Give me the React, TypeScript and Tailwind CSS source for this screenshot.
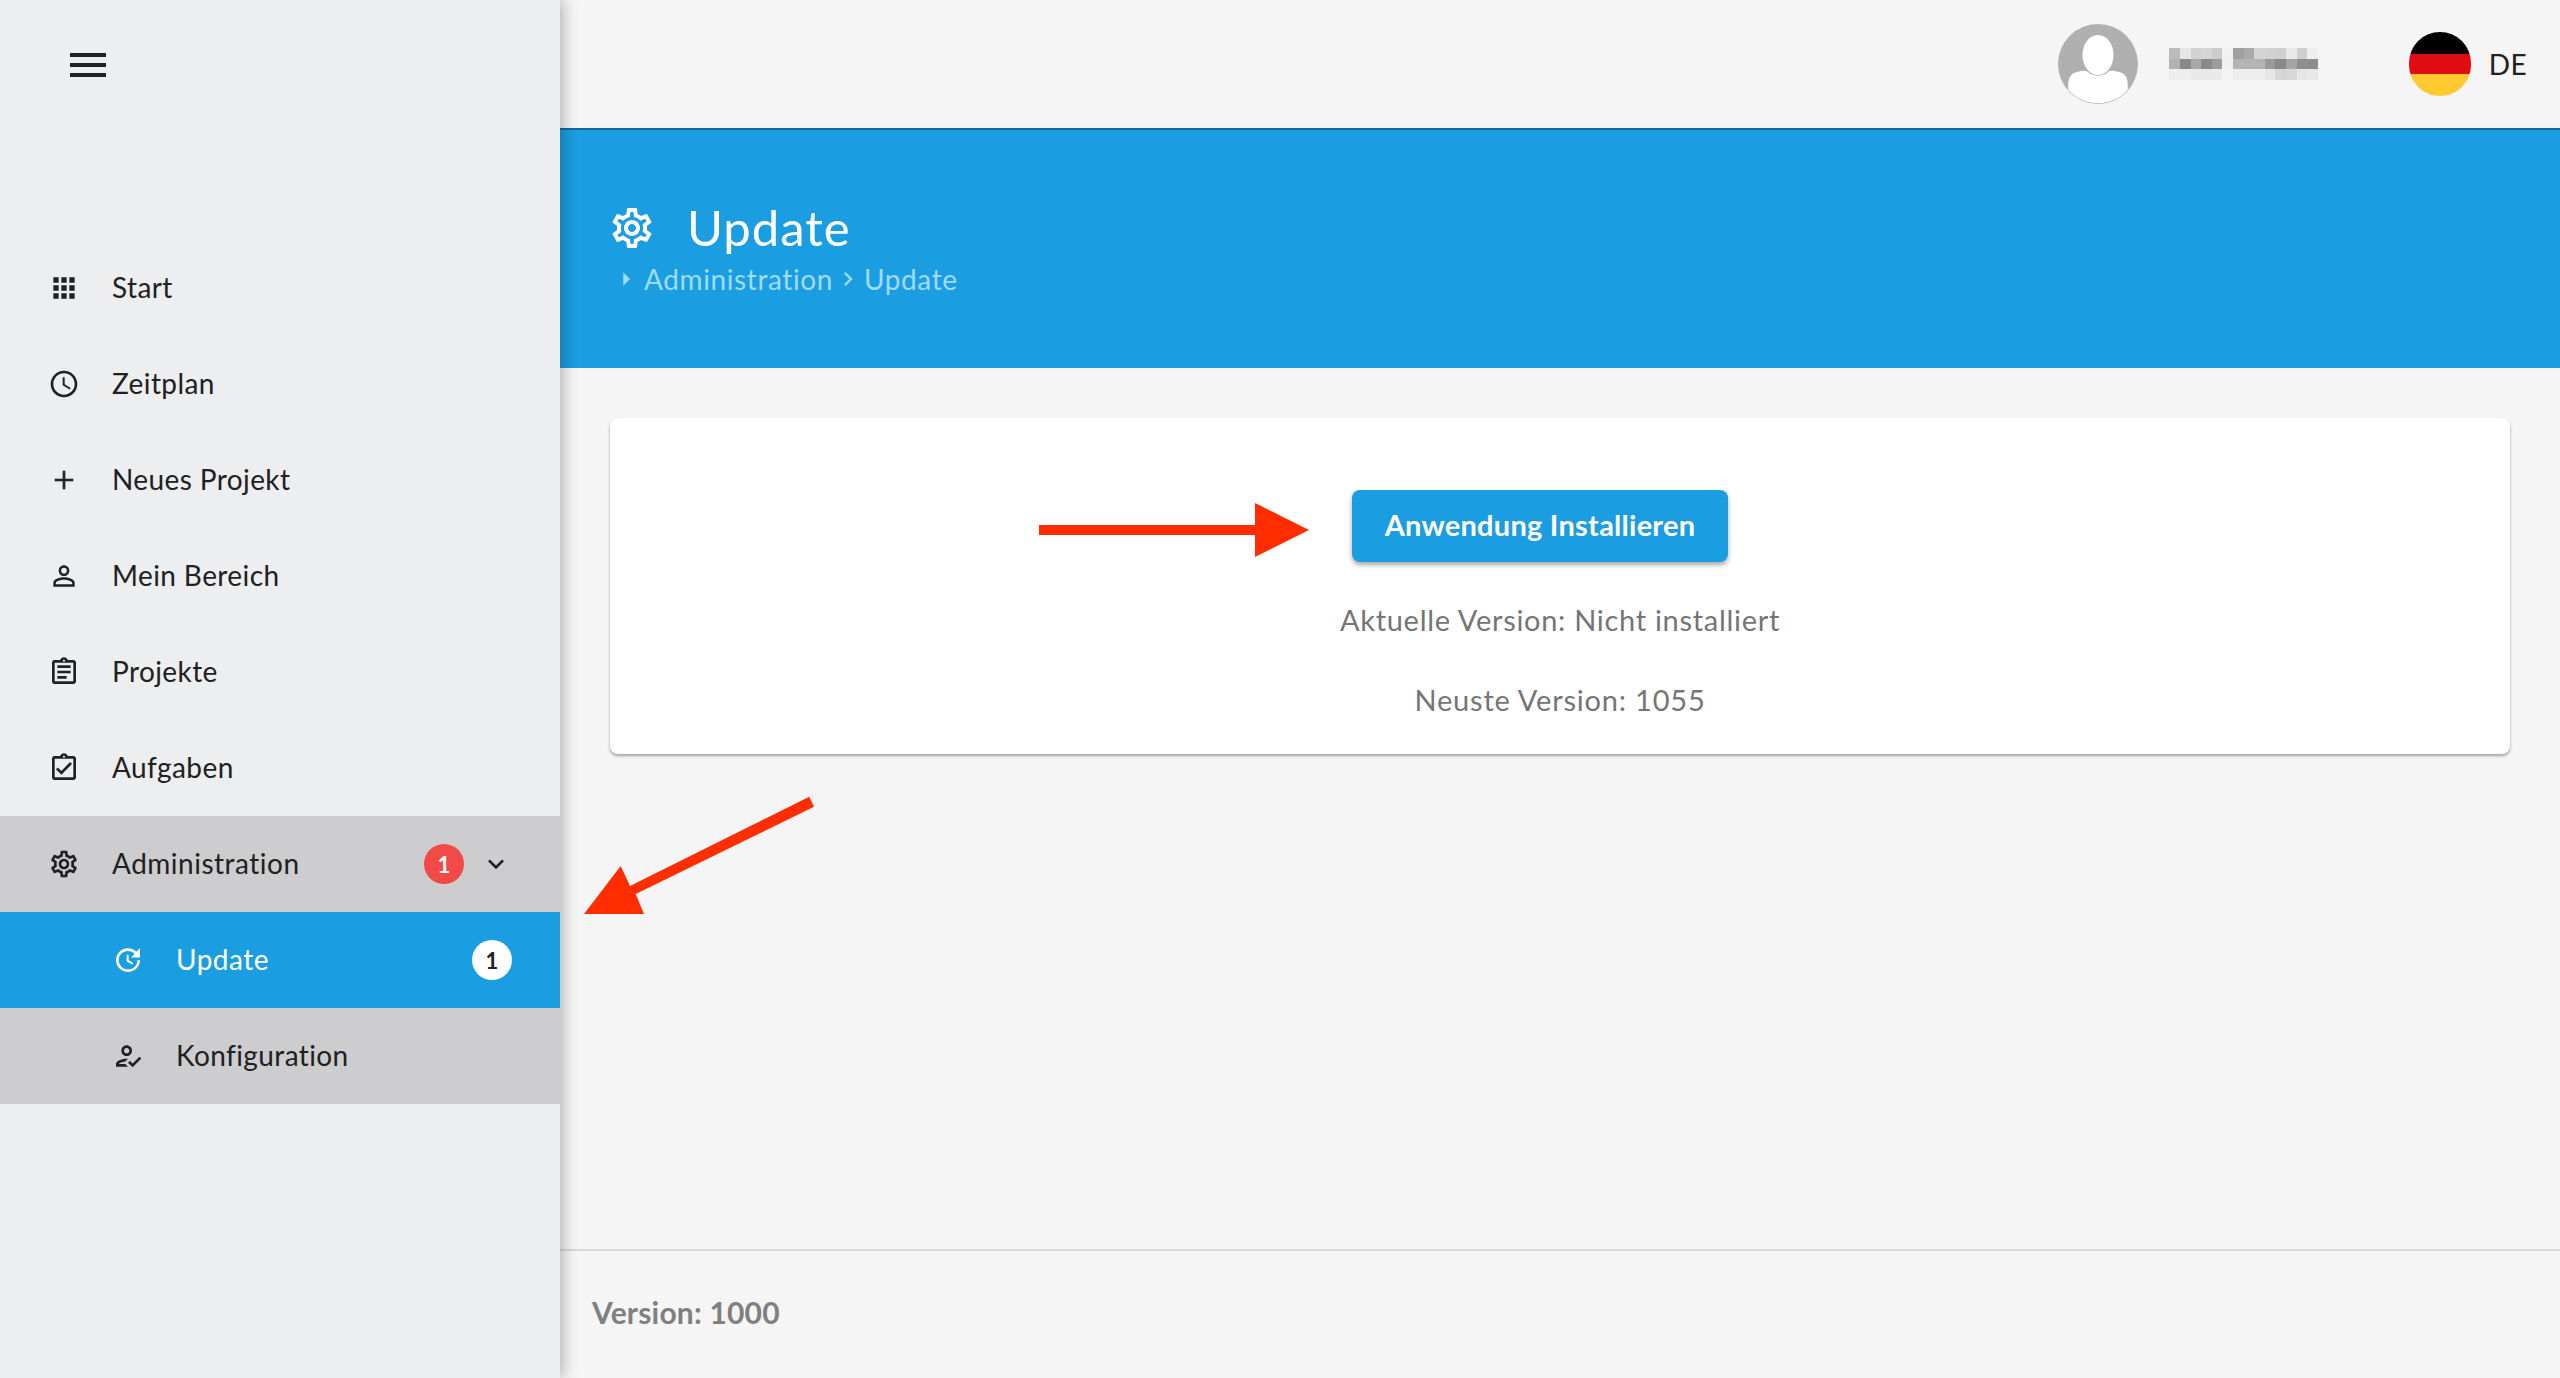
import {
  MdAccessTime,
  MdAdd,
  MdApps,
  MdArrowRight,
  MdChevronRight,
  MdExpandMore,
  MdMenu,
  MdOutlineAssignment,
  MdOutlineAssignmentTurnedIn,
  MdOutlineHowToReg,
  MdOutlineSettings,
  MdPersonOutline,
  MdUpdate,
} from "react-icons/md";

const menu = [
  { label: "Start", icon: MdApps },
  { label: "Zeitplan", icon: MdAccessTime },
  { label: "Neues Projekt", icon: MdAdd },
  { label: "Mein Bereich", icon: MdPersonOutline },
  { label: "Projekte", icon: MdOutlineAssignment },
  { label: "Aufgaben", icon: MdOutlineAssignmentTurnedIn },
];

// blurred user name, one row per line of mosaic cells
const mosaic = [
  ["#bbb", "#e6e6e6", "#d2d2d2", "#d6d6d6", "#ccc", "#f2f2f2", "#a0a0a0", "#a9a9a9", "#d4d4d4", "#d2d2d2", "#d0d0d0", "#e8e8e8", "#cfcfcf", "#eee"],
  ["#b2b2b2", "#8a8a8a", "#a8a8a8", "#8a8a8a", "#9c9c9c", "#f0f0f0", "#b4b4b4", "#b4b4b4", "#b4b4b4", "#9a9a9a", "#8a8a8a", "#a4a4a4", "#8e8e8e", "#8e8e8e"],
  ["#eee", "#eee", "#e9e9e9", "#e9e9e9", "#eaeaea", "#f3f3f3", "#eee", "#eee", "#eee", "#e6e6e6", "#d6d6d6", "#d8d8d8", "#e6e6e6", "#e8e8e8"],
];

function Badge({ className, children }: { className: string; children: string }) {
  return (
    <span className={`flex h-10 w-10 items-center justify-center rounded-full text-[22px] font-bold ${className}`}>
      {children}
    </span>
  );
}

function Sidebar() {
  return (
    <aside className="relative z-10 flex w-[560px] shrink-0 flex-col bg-[#edeef0] text-[#212121] shadow-[3px_0_14px_rgba(0,0,0,0.28)]">
      <div className="h-[240px] pl-16 pt-[41px]">
        <MdMenu size={48} />
      </div>
      {menu.map((item) => (
        <div key={item.label} className="flex h-24 items-center gap-8 pl-12">
          <item.icon size={32} />
          <span className="pb-[3px] tracking-[0.4px]">{item.label}</span>
        </div>
      ))}
      <div className="bg-[#cdcdcf]">
        <div className="flex h-24 items-center gap-8 pl-12 pr-12">
          <MdOutlineSettings size={32} />
          <span className="flex-1 pb-[3px] tracking-[0.5px]">Administration</span>
          <div className="flex items-center gap-4">
            <Badge className="bg-[#f44a47] text-white">1</Badge>
            <MdExpandMore size={32} />
          </div>
        </div>
        <div className="flex h-24 items-center gap-8 bg-[#1b9de2] pl-28 pr-12 text-white">
          <MdUpdate size={32} />
          <span className="flex-1 pb-[3px] tracking-[0.5px]">Update</span>
          <Badge className="bg-white text-[#212121]">1</Badge>
        </div>
        <div className="flex h-24 items-center gap-8 pl-28">
          <MdOutlineHowToReg size={32} />
          <span className="pb-[3px] tracking-[0.4px]">Konfiguration</span>
        </div>
      </div>
    </aside>
  );
}

function TopBar() {
  return (
    <header className="flex h-[128px] items-center justify-end bg-[#f5f5f5] pr-[33px]">
      <svg width="80" height="80" viewBox="0 0 80 80">
        <circle cx="40" cy="40" r="40" fill="#b0b0b0" />
        <ellipse cx="40" cy="31" rx="15.5" ry="20" fill="#fff" />
        <path d="M10.3 66 C10 58 10 50 19 48 C24 47 27 46 30 48 C35 53 45 53 50 48 C53 46 56 47 61 48 C70 50 70 58 69.7 66 A40 40 0 0 1 10.3 66 Z" fill="#fff" />
      </svg>
      <div className="ml-[31px] flex flex-col">
        {mosaic.map((row, i) => (
          <div key={i} className="flex">
            {row.map((c, j) => (
              <div key={j} className="h-[10.5px] w-[10.6px]" style={{ backgroundColor: c }} />
            ))}
          </div>
        ))}
      </div>
      <div className="ml-[91px] flex h-16 w-[62px] flex-col overflow-hidden rounded-full">
        <div className="h-[22px] bg-black" />
        <div className="h-5 bg-[#e00c14]" />
        <div className="flex-1 bg-[#fdc92e]" />
      </div>
      <span className="ml-[18px] text-[#212121] tracking-[0.4px]">DE</span>
    </header>
  );
}

function PageHeader() {
  return (
    <div className="h-[240px] border-t-2 border-[#17689a] bg-[#1b9de2] pl-[48px] pt-[66px] text-white">
      <div className="flex h-[64px] items-center gap-[31px]">
        <MdOutlineSettings size={48} />
        <h1 className="text-[49px] tracking-[1px]">Update</h1>
      </div>
      <div className="-mt-[2px] flex items-center pl-[2px] text-[#a0dcfa] tracking-[0.6px]">
        <MdArrowRight size={32} />
        <span className="ml-[2px]">Administration</span>
        <MdChevronRight size={28} className="mx-[1.5px]" />
        <span>Update</span>
      </div>
    </div>
  );
}

export default function App() {
  return (
    <div className="relative flex h-[1378px] w-[2560px] overflow-hidden bg-[#f5f5f5] font-['Lato',sans-serif] text-[28px]">
      <Sidebar />
      <main className="flex min-w-0 flex-1 flex-col">
        <TopBar />
        <PageHeader />
        <div className="flex-1 px-[50px] pt-[50px]">
          <section className="flex flex-col items-center rounded-lg bg-white pb-[30px] pt-[72px] shadow-[0_2px_3px_rgba(0,0,0,0.35)]">
            <button className="mr-10 h-[72px] w-[376px] rounded-lg bg-[#1b9de2] pb-[2px] text-[29px] font-bold tracking-[0.25px] text-white shadow-[0_3px_5px_rgba(0,0,0,0.35)]">
              Anwendung Installieren
            </button>
            <p className="mt-[34px] text-[29px] leading-[48px] tracking-[0.7px] text-[#757575]">Aktuelle Version: Nicht installiert</p>
            <p className="mt-8 text-[29px] leading-[48px] tracking-[0.8px] text-[#757575]">Neuste Version: 1055</p>
          </section>
        </div>
        <footer className="flex h-[129px] items-center border-t-2 border-[#d8d8d8] pb-1 pl-8 text-[30px] font-bold tracking-[0.2px] text-[#808080]">
          Version: 1000
        </footer>
      </main>

      {/* red annotation arrows on top of the screenshot */}
      <svg className="absolute left-[1039px] top-[503px]" width="270" height="54" viewBox="0 0 270 54">
        <path d="M0 22H216V0L270 27L216 54V32H0Z" fill="#ff2d00" />
      </svg>
      <svg className="absolute left-[584px] top-[796px]" width="230" height="118" viewBox="0 0 230 118">
        <path d="M0 118L36.7 70L46 90L225.3 0.7L230 10.7L51.7 98L60 118Z" fill="#ff2d00" />
      </svg>
    </div>
  );
}
